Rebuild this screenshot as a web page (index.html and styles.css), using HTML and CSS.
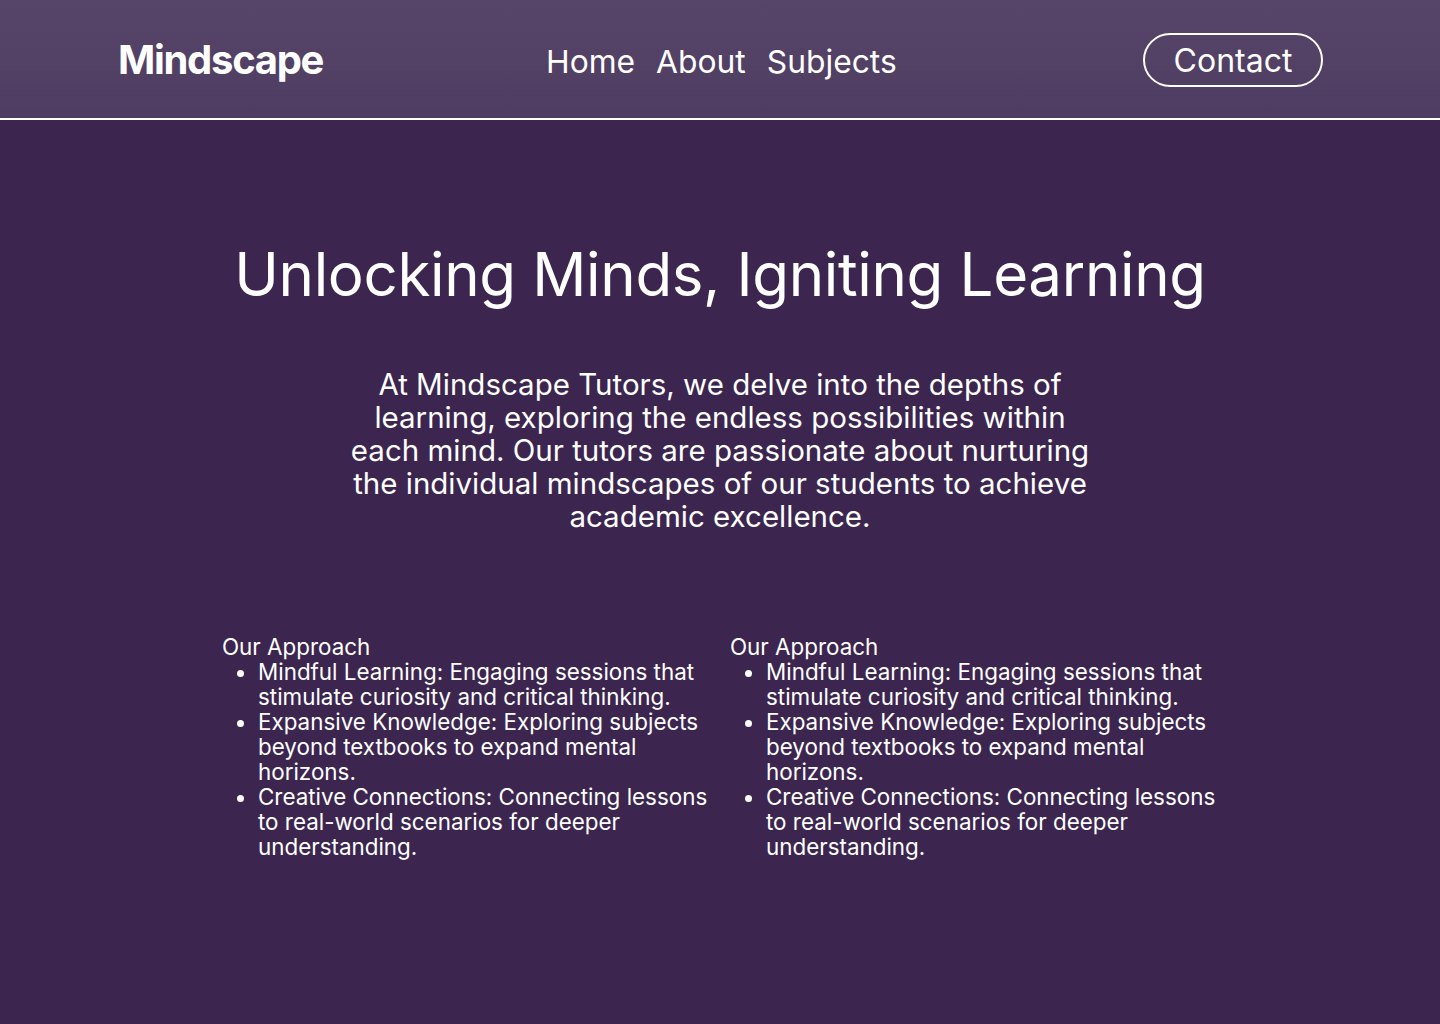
FILE: index.html
```html
<!DOCTYPE html>
<html lang="en">
<head>
<meta charset="utf-8">
<title>Mindscape</title>
<link rel="stylesheet" href="styles.css">
</head>
<body>
<header class="site-header">
  <div class="logo">Mindscape</div>
  <nav class="nav">
    <a href="#">Home</a>
    <a href="#">About</a>
    <a href="#">Subjects</a>
  </nav>
  <a class="contact" href="#">Contact</a>
</header>
<main class="main">
  <h1 class="hero-title">Unlocking Minds, Igniting Learning</h1>
  <p class="hero-text">At Mindscape Tutors, we delve into the depths of learning, exploring the endless possibilities within each mind. Our tutors are passionate about nurturing the individual mindscapes of our students to achieve academic excellence.</p>
  <section class="columns">
    <div class="col">
      <div class="col-title">Our Approach</div>
      <ul class="col-list">
        <li>Mindful Learning: Engaging sessions that stimulate curiosity and critical thinking.</li>
        <li>Expansive Knowledge: Exploring subjects beyond textbooks to expand mental horizons.</li>
        <li>Creative Connections: Connecting lessons to real-world scenarios for deeper understanding.</li>
      </ul>
    </div>
    <div class="col">
      <div class="col-title">Our Approach</div>
      <ul class="col-list">
        <li>Mindful Learning: Engaging sessions that stimulate curiosity and critical thinking.</li>
        <li>Expansive Knowledge: Exploring subjects beyond textbooks to expand mental horizons.</li>
        <li>Creative Connections: Connecting lessons to real-world scenarios for deeper understanding.</li>
      </ul>
    </div>
  </section>
</main>
</body>
</html>
```

FILE: styles.css
```css
html, body {
  margin: 0;
  padding: 0;
}
body {
  background: #3c2650;
  color: #ffffff;
  font-family: Inter, "Noto Sans", sans-serif;
  min-height: 1024px;
}
.site-header {
  height: 120px;
  box-sizing: border-box;
  border-bottom: 2px solid #ffffff;
  background: linear-gradient(180deg, #564569 0%, #4f3c62 100%);
  display: flex;
  align-items: center;
  justify-content: space-between;
  padding: 2px 118px 0 118px;
  position: relative;
}
.logo {
  font-family: Inter, sans-serif;
  font-weight: 700;
  font-size: 40px;
  letter-spacing: -1.3px;
  padding-bottom: 2px;
}
.nav {
  display: flex;
  gap: 21px;
  position: absolute;
  left: 546px;
  top: 2px;
  height: 118px;
  align-items: center;
}
.nav a, .contact {
  color: #ffffff;
  text-decoration: none;
  font-size: 31.8px;
  font-weight: 400;
}
.contact {
  border: 2px solid #ffffff;
  border-radius: 28px;
  width: 180px;
  height: 54px;
  box-sizing: border-box;
  display: flex;
  align-items: center;
  justify-content: center;
  margin-right: -1px;
  font-size: 32px;
}
.main {
  display: flex;
  flex-direction: column;
  align-items: center;
}
.hero-title {
  font-family: Inter, sans-serif;
  font-weight: 400;
  font-size: 60px;
  margin: 118px 0 0 0;
  line-height: 72px;
  letter-spacing: -0.35px;
}
.hero-text {
  width: 762px;
  text-align: center;
  font-size: 29.5px;
  line-height: 33px;
  margin: 58px 0 0 0;
  font-weight: 400;
}
.columns {
  display: grid;
  grid-template-columns: 488px 488px;
  column-gap: 20px;
  margin-top: 101px;
  font-size: 22.4px;
  line-height: 25px;
}
.col-list {
  margin: 0;
  padding-left: 36px;
}
```
